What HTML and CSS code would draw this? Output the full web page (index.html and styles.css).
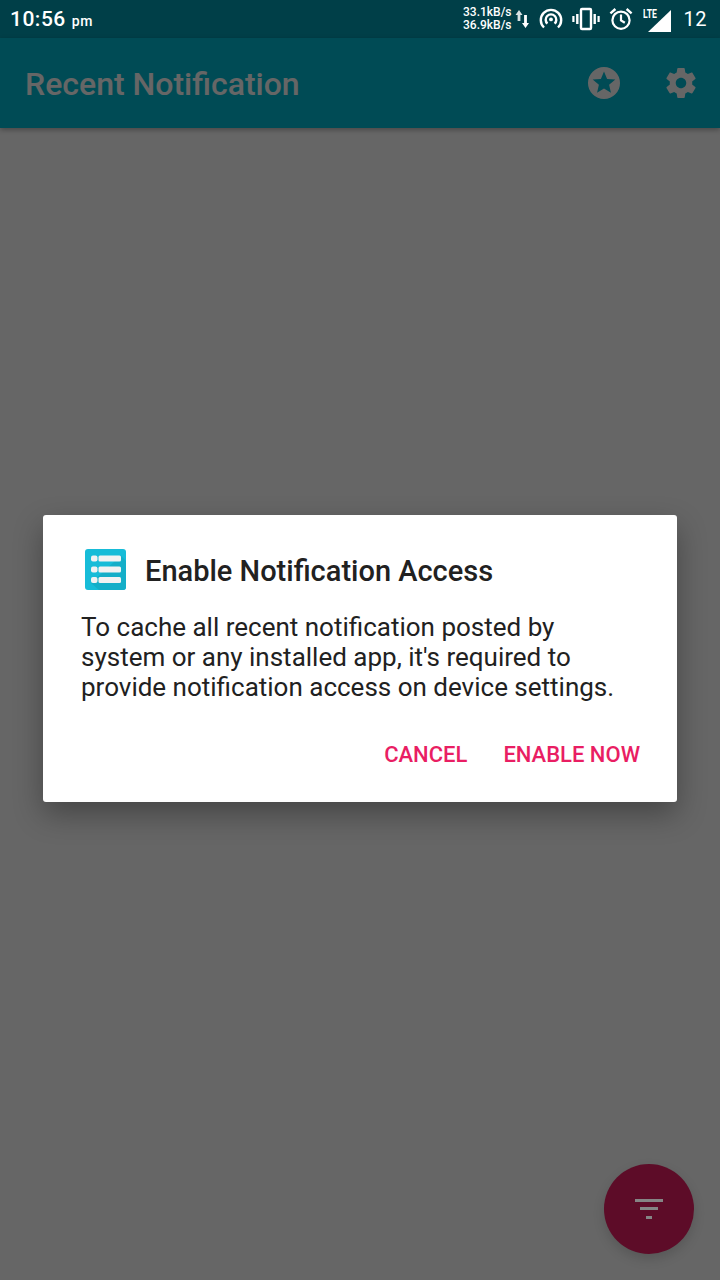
FILE: index.html
```html
<!DOCTYPE html>
<html>
<head>
	<title>Recent Notification</title>
	<meta charset="utf-8">
	<link rel="stylesheet" href="styles.css">
</head>
<body>
<!-- status bar -->
<div class="statusBar">
	<div class="clock">10:56<span class="ampm">pm</span></div>
	<div class="statusIcons">
		<div class="speed"><span>33.1kB/s</span><span>36.9kB/s</span></div>
		<svg class="icoData" width="16" height="22" viewBox="0 0 16 22"><path d="M4 2 L0.5 7 H2.6 V13 H5.4 V7 H7.5 Z" fill="#fff" opacity=".85"/><path d="M10.5 20 L7 15 H9.1 V7 H11.9 V15 H14 Z" fill="#fff"/></svg>
		<svg class="icoHotspot" width="24" height="24" viewBox="0 0 24 24" fill="none" stroke="#fff" stroke-width="2.4"><path d="M5 20.5 A10.2 10.2 0 1 1 19 20.5"/><path d="M8.4 16.6 A5.3 5.3 0 1 1 15.6 16.6"/><circle cx="12" cy="12.4" r="1.9" fill="#fff" stroke="none"/></svg>
		<svg class="icoVibrate" width="28" height="24" viewBox="0 0 28 24" fill="none" stroke="#fff"><rect x="9" y="2" width="10" height="20" rx="1" stroke-width="2.4"/><path d="M5.3 7 V17 M22.7 7 V17" stroke-width="2.4"/><path d="M1.4 9 V15 M26.6 9 V15" stroke-width="2.2"/></svg>
		<svg class="icoAlarm" width="24" height="24" viewBox="0 0 24 24" fill="none" stroke="#fff" stroke-width="2.2"><circle cx="12" cy="13.2" r="8.6"/><path d="M12 7.5 V13.4 L15.8 15.8"/><path d="M1.4 6.4 L6.4 2 M22.6 6.4 L17.6 2" stroke-width="2.4"/></svg>
		<div class="signal">
			<span class="lte">LTE</span>
			<svg width="24" height="22" viewBox="0 0 24 22"><path d="M23 0 V22 H0 Z" fill="#fff"/></svg>
		</div>
		<span class="battery">12</span>
	</div>
</div>

<!-- main screen -->
<div class="screen">
	<div class="appBar">
		<h1>Recent Notification</h1>
		<div class="appActions">
			<svg width="34" height="34" viewBox="0 0 24 24"><path fill="#fff" d="M12 .7a11.3 11.3 0 1 0 0 22.6 11.3 11.3 0 0 0 0-22.6zm4.9 18.2L12 15.9l-4.9 3 1.3-5.6L4 9.6l5.8-.5L12 3.8l2.2 5.3 5.8.5-4.4 3.7z"/></svg>
			<svg width="36" height="36" viewBox="0 0 24 24"><path fill="#fff" d="M19.43 12.98c.04-.32.07-.64.07-.98s-.03-.66-.07-.98l2.11-1.65c.19-.15.24-.42.12-.64l-2-3.46c-.12-.22-.39-.3-.61-.22l-2.49 1c-.52-.4-1.08-.73-1.69-.98l-.38-2.65C14.46 2.18 14.25 2 14 2h-4c-.25 0-.46.18-.49.42l-.38 2.65c-.61.25-1.17.59-1.69.98l-2.49-1c-.23-.09-.49 0-.61.22l-2 3.46c-.13.22-.07.49.12.64l2.11 1.65c-.04.32-.07.65-.07.98s.03.66.07.98l-2.11 1.65c-.19.15-.24.42-.12.64l2 3.46c.12.22.39.3.61.22l2.49-1c.52.4 1.08.73 1.69.98l.38 2.65c.03.24.24.42.49.42h4c.25 0 .46-.18.49-.42l.38-2.65c.61-.25 1.17-.59 1.69-.98l2.49 1c.23.09.49 0 .61-.22l2-3.46c.12-.22.07-.49-.12-.64l-2.11-1.65zM12 15.5c-1.93 0-3.5-1.57-3.5-3.5s1.57-3.5 3.5-3.5 3.5 1.57 3.5 3.5-1.57 3.5-3.5 3.5z"/></svg>
		</div>
	</div>

	<div class="scrim">
		<div class="dialog">
			<div class="dialogTitle">
				<svg width="41" height="41" viewBox="0 0 41 41">
					<rect width="41" height="41" rx="3" fill="#17bcd8"/>
					<path d="M36 6.5 L41 12 V38 a3 3 0 0 1 -3 3 H14 L6 34 Z" fill="#14aec8"/>
					<g fill="#f2f2f2">
						<rect x="6" y="6.5" width="6.5" height="6" rx="2"/>
						<rect x="13.5" y="6.5" width="22.5" height="6" rx="1.5"/>
						<rect x="6" y="17.5" width="6.5" height="6" rx="2"/>
						<rect x="13.5" y="17.5" width="22.5" height="6" rx="1.5"/>
						<rect x="6" y="28" width="6.5" height="6" rx="2"/>
						<rect x="13.5" y="28" width="22.5" height="6" rx="1.5"/>
					</g>
				</svg>
				<h2>Enable Notification Access</h2>
			</div>
			<p>To cache all recent notification posted by system or any installed app, it's required to provide notification access on device settings.</p>
			<div class="dialogBtns">
				<span>CANCEL</span>
				<span>ENABLE NOW</span>
			</div>
		</div>
	</div>

	<div class="fab">
		<svg width="28" height="20" viewBox="0 0 28 20"><path fill="#858585" d="M0 0h28v3H0zM5 8h18v3H5zM11 17h6v3h-6z"/></svg>
	</div>
</div>
</body>
</html>
```

FILE: styles.css
```css
html,body{
	padding: 0;
	margin: 0;
	height: 100%;
}

body{
	background-color: #fff;
	font-family: Roboto, "Liberation Sans", sans-serif;
	display: flex;
	flex-direction: column;
	overflow: hidden;
}

.statusBar{
	height: 38px;
	flex: none;
	background-color: #003f48;
	color: #fff;
	display: flex;
	justify-content: space-between;
	align-items: center;
	padding: 0 13px 0 10px;
}
.clock{
	font-size: 21px;
	font-weight: 500;
	letter-spacing: .5px;
}
.ampm{
	font-size: 14px;
	margin-left: 6px;
}
.statusIcons{
	display: flex;
	align-items: center;
}
.speed{
	display: flex;
	flex-direction: column;
	font-size: 12px;
	font-weight: 500;
	line-height: 13px;
	margin-right: 3px;
}
.icoData{
	margin-right: 8px;
}
.icoHotspot{
	margin-right: 9px;
}
.icoVibrate{
	margin-right: 9px;
}
.signal{
	width: 39px;
	height: 26px;
	position: relative;
}
.signal svg{
	position: absolute;
	right: 0;
	bottom: 0;
}
.lte{
	position: absolute;
	left: 10px;
	top: 2px;
	font-size: 12px;
	font-weight: 700;
	line-height: 12px;
	transform: scaleX(.72);
	transform-origin: left;
}
.battery{
	font-size: 20px;
	margin-left: 12px;
	letter-spacing: .5px;
}

.screen{
	flex: 1;
	position: relative;
	display: flex;
	flex-direction: column;
}
.appBar{
	height: 90px;
	background-color: #00bcd4;
	color: #fff;
	display: flex;
	justify-content: space-between;
	align-items: center;
	padding: 0 21px 0 25px;
	box-shadow: 0 2px 5px rgba(0,0,0,.3);
}
.appBar h1{
	margin: 1px 0 0 0;
	font-size: 32px;
	font-weight: 500;
}
.appActions{
	display: flex;
	align-items: center;
	gap: 42px;
}
.appActions svg{
	display: block;
}

.scrim{
	position: absolute;
	top: 0;
	left: 0;
	right: 0;
	bottom: 0;
	padding-bottom: 1px;
	background-color: rgba(0,0,0,.6);
	display: flex;
	align-items: center;
	justify-content: center;
}
.dialog{
	width: 634px;
	height: 287px;
	box-sizing: border-box;
	background-color: #fff;
	border-radius: 3px;
	padding: 34px 37px 0 38px;
	box-shadow: 0 12px 30px rgba(0,0,0,.32);
}
.dialogTitle{
	display: flex;
	align-items: center;
	gap: 19px;
	padding-left: 4px;
}
.dialogTitle h2{
	margin: 3px 0 0 0;
	font-size: 29px;
	font-weight: 500;
	color: #212121;
}
.dialog p{
	margin: 22px 0 0 0;
	font-size: 26px;
	line-height: 30px;
	color: #212121;
}
.dialogBtns{
	display: flex;
	justify-content: flex-end;
	gap: 36px;
	margin-top: 40px;
	font-size: 22px;
	font-weight: 500;
	color: #e91e63;
}

/* already dimmed, it sits over the scrim so its icon can stay lighter */
.fab{
	position: absolute;
	right: 26px;
	bottom: 26px;
	width: 90px;
	height: 90px;
	border-radius: 50%;
	background-color: #5d0c28;
	display: flex;
	align-items: center;
	justify-content: center;
	box-shadow: 0 5px 12px rgba(0,0,0,.15);
}
```
